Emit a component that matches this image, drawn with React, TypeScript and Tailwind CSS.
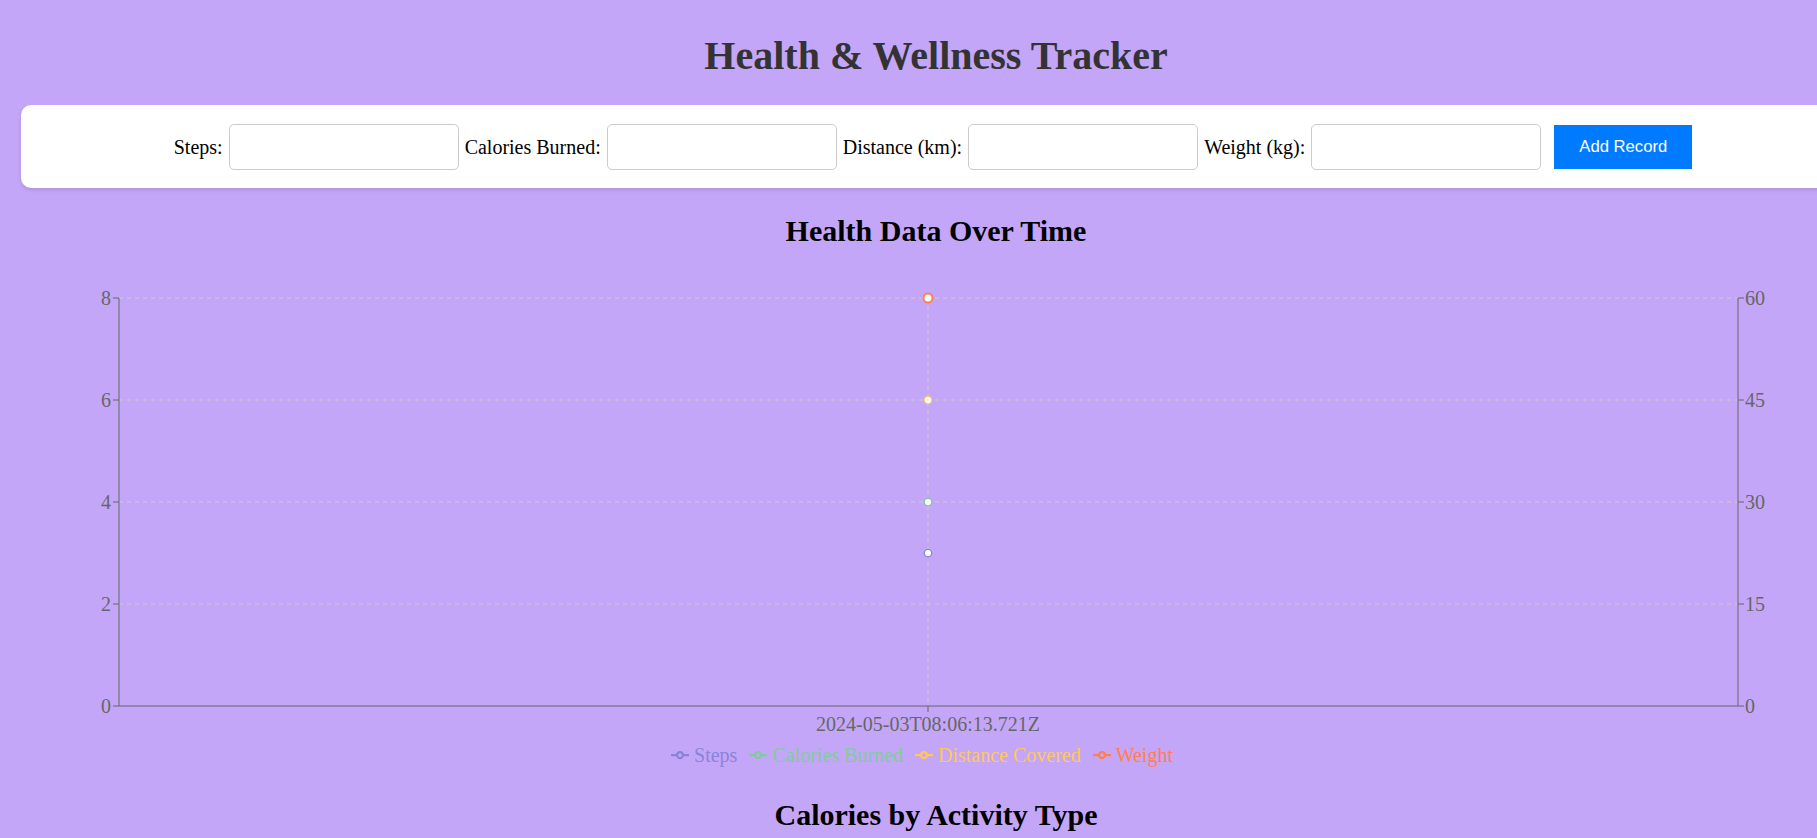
import React from "react"

interface Series {
    name: string;
    color: string;
}

const series: Series[] = [
    { name: "Steps", color: "#8884d8" },
    { name: "Calories Burned", color: "#82ca9d" },
    { name: "Distance Covered", color: "#ffc658" },
    { name: "Weight", color: "#ff7f50" },
]

// plot area in svg coords
const left = 98
const right = 1717
const top = 49
const bottom = 457
const midX = 907

function yLeft(v: number) {
    return bottom - (v / 8) * (bottom - top)
}

function yRight(v: number) {
    return bottom - (v / 60) * (bottom - top)
}

function LegendIcon({ color }: { color: string }) {
    return (
        <svg width="18" height="18" viewBox="0 0 32 32" className="mr-[5px] inline-block">
            <path
                strokeWidth="4"
                fill="none"
                stroke={color}
                d="M0,16h10.666666666666666 A5.333333333333333,5.333333333333333,0,1,1,21.333333333333332,16 H32M21.333333333333332,16 A5.333333333333333,5.333333333333333,0,1,1,10.666666666666666,16"
            />
        </svg>
    )
}

function HealthChart() {
    const leftTicks = [0, 2, 4, 6, 8]
    const rightTicks = [0, 15, 30, 45, 60]

    return (
        <div>
            <svg width="1830" height="490" className="block">
                {/* grid */}
                {leftTicks.filter(t => t > 0).map(t => (
                    <line key={t} x1={left} x2={right} y1={yLeft(t)} y2={yLeft(t)} stroke="#ccc" strokeDasharray="4 4" />
                ))}
                <line x1={midX} x2={midX} y1={top} y2={bottom} stroke="#ccc" strokeDasharray="4 4" />

                {/* left axis */}
                <line x1={left} x2={left} y1={top} y2={bottom} stroke="#666" />
                {leftTicks.map(t => (
                    <g key={t}>
                        <line x1={left - 6} x2={left} y1={yLeft(t)} y2={yLeft(t)} stroke="#666" />
                        <text x={left - 8} y={yLeft(t)} dy="0.355em" textAnchor="end" fill="#666" fontSize="20">{t}</text>
                    </g>
                ))}

                {/* right axis */}
                <line x1={right} x2={right} y1={top} y2={bottom} stroke="#666" />
                {rightTicks.map(t => (
                    <g key={t}>
                        <line x1={right} x2={right + 6} y1={yRight(t)} y2={yRight(t)} stroke="#666" />
                        <text x={right + 7} y={yRight(t)} dy="0.355em" textAnchor="start" fill="#666" fontSize="20">{t}</text>
                    </g>
                ))}

                {/* x axis */}
                <line x1={left} x2={right} y1={bottom} y2={bottom} stroke="#666" />
                <line x1={midX} x2={midX} y1={bottom} y2={bottom + 6} stroke="#666" />
                <text x={midX} y={bottom + 11} dy="0.71em" textAnchor="middle" fill="#666" fontSize="20">2024-05-03T08:06:13.721Z</text>

                {/* dots */}
                <circle cx={midX} cy={yLeft(3)} r="3.75" fill="#fff" stroke="#8884d8" strokeWidth="1.25" />
                <circle cx={midX} cy={yRight(30)} r="3.75" fill="#fff" stroke="#82ca9d" strokeWidth="1.25" />
                <circle cx={midX} cy={yLeft(6)} r="3.75" fill="#fff" stroke="#ffc658" strokeWidth="1.25" />
                <circle cx={midX} cy={yRight(60)} r="4.5" fill="#fff" stroke="#ff7f50" strokeWidth="2" />
            </svg>
            <div className="mt-[1px] flex h-[30px] items-center justify-center pr-[16px] text-[20px]">
                {series.map(s => (
                    <span key={s.name} className="mr-[12px] flex items-center" style={{ color: s.color }}>
                        <LegendIcon color={s.color} />
                        {s.name}
                    </span>
                ))}
            </div>
        </div>
    )
}

export default function App() {
    const fields = ["Steps:", "Calories Burned:", "Distance (km):", "Weight (kg):"]

    return (
        <div className="min-h-screen w-full overflow-hidden bg-[#c4a6f9] font-['Liberation_Serif',serif]">
            <div className="w-[1872px] px-[21px] pt-[33px] pb-[40px]">
                <h1 className="text-center text-[40px] leading-[46px] font-bold text-[#333]">
                    Health &amp; Wellness Tracker
                </h1>

                <form
                    onSubmit={e => e.preventDefault()}
                    className="mt-[26px] flex h-[83px] items-center justify-center rounded-[10px] bg-white pr-[6px] text-[20px] text-black shadow-[0_2px_4px_rgba(0,0,0,0.12)]"
                >
                    {fields.map(label => (
                        <React.Fragment key={label}>
                            <label className="mr-[6px]">{label}</label>
                            <input
                                type="number"
                                className="mr-[6px] h-[46px] w-[230px] rounded-[5px] border border-[#ccc] bg-white px-2"
                            />
                        </React.Fragment>
                    ))}
                    <button
                        type="submit"
                        className="ml-[7px] h-[44px] w-[138px] bg-[#007bff] font-['Liberation_Sans',Arial,sans-serif] text-[16.67px] text-white"
                    >
                        Add Record
                    </button>
                </form>

                <h2 className="mt-[25px] text-center text-[30px] leading-[36px] font-bold text-black">
                    Health Data Over Time
                </h2>

                <HealthChart />

                <h2 className="mt-[27px] text-center text-[30px] leading-[36px] font-bold text-black">
                    Calories by Activity Type
                </h2>
            </div>
        </div>
    )
}
